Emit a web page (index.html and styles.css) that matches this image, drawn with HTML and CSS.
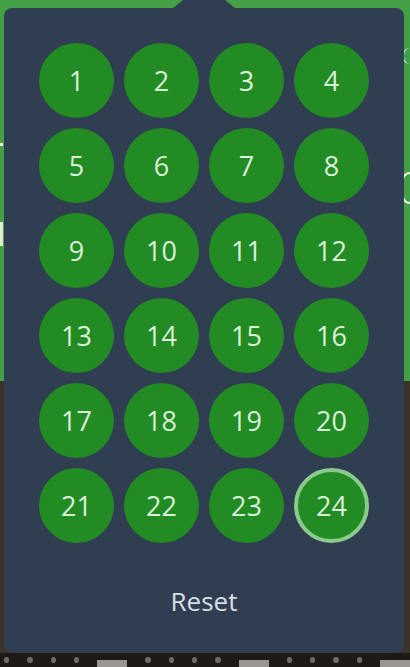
FILE: index.html
```html
<!DOCTYPE html>
<html>
<head>
<meta charset="utf-8">
<link rel="stylesheet" href="styles.css">
</head>
<body>
<div class="scene">
  <div class="bg-top">
    <span class="frag frag-l1"></span>
    <span class="frag frag-l2"></span>
    <span class="frag frag-r1"></span>
    <span class="frag frag-r2"></span>
  </div>
  <div class="bg-bottom"></div>
  <div class="strip">
    <span class="dot"></span><span class="dot"></span><span class="dot"></span><span class="dot"></span>
    <span class="tag"></span>
    <span class="dot"></span><span class="dot"></span><span class="dot"></span><span class="dot"></span>
    <span class="tag"></span>
    <span class="dot"></span><span class="dot"></span><span class="dot"></span><span class="dot"></span>
    <span class="tag"></span>
  </div>

  <div class="popover">
    <div class="arrow"></div>
    <div class="grid">
      <button class="num">1</button><button class="num">2</button><button class="num">3</button><button class="num">4</button>
      <button class="num">5</button><button class="num">6</button><button class="num">7</button><button class="num">8</button>
      <button class="num">9</button><button class="num">10</button><button class="num">11</button><button class="num">12</button>
      <button class="num">13</button><button class="num">14</button><button class="num">15</button><button class="num">16</button>
      <button class="num">17</button><button class="num">18</button><button class="num">19</button><button class="num">20</button>
      <button class="num">21</button><button class="num">22</button><button class="num">23</button><button class="num selected">24</button>
    </div>
    <button class="reset">Reset</button>
  </div>
</div>
</body>
</html>
```

FILE: styles.css
```css
html, body {
  margin: 0;
  padding: 0;
}
body {
  width: 410px;
  height: 667px;
  overflow: hidden;
  font-family: "Open Sans", "Noto Sans", sans-serif;
}
.scene {
  position: relative;
  width: 410px;
  height: 667px;
  display: flex;
  flex-direction: column;
}
.bg-top {
  position: relative;
  height: 381px;
  background: #43a047;
}
.bg-bottom {
  flex: 1;
  background: #3a3329;
}
.strip {
  height: 14px;
  background: #1f1a17;
  display: flex;
  align-items: center;
  gap: 18px;
  padding-left: 4px;
}
.dot {
  width: 6px;
  height: 6px;
  border-radius: 50%;
  background: #6d6a68;
}
.tag {
  width: 34px;
  height: 7px;
  background: #9a9692;
  margin-top: 6px;
}
.frag {
  position: absolute;
  background: #e8f3e6;
}
.frag-l1 { left: 0; top: 143px; width: 3px; height: 3px; }
.frag-l2 { left: 0; top: 222px; width: 3px; height: 24px; background: #e4ecd8; }
.frag-r1 {
  right: 0; top: 48px; width: 6px; height: 16px;
  background: transparent;
  border-left: 2px solid #bff0f0;
  border-radius: 8px 0 0 8px;
}
.frag-r2 {
  right: 0; top: 172px; width: 6px; height: 28px;
  background: transparent;
  border-left: 2px solid #e9f3e8;
  border-top: 2px solid #e9f3e8;
  border-bottom: 2px solid #e9f3e8;
  border-radius: 14px 0 0 14px;
}
.popover {
  position: absolute;
  left: 4px;
  top: 8px;
  width: 400px;
  height: 645px;
  box-sizing: border-box;
  background: #2f3e50;
  border-radius: 8px;
  padding: 35px 35px 0;
  display: flex;
  flex-direction: column;
  align-items: center;
}
.arrow {
  position: absolute;
  left: 169px;
  top: -8px;
  width: 62px;
  height: 8px;
  background: #2f3e50;
  clip-path: polygon(0 100%, 16% 0, 84% 0, 100% 100%);
}
.grid {
  display: grid;
  grid-template-columns: repeat(4, 75px);
  grid-auto-rows: 75px;
  gap: 10px;
}
.num {
  width: 75px;
  height: 75px;
  border-radius: 50%;
  border: none;
  padding: 0;
  margin: 0;
  background: #238b23;
  color: #d9f1d9;
  font-family: "Open Sans", "Noto Sans", sans-serif;
  font-size: 27px;
  line-height: 1;
  display: flex;
  align-items: center;
  justify-content: center;
}
.num.selected {
  box-sizing: border-box;
  border: 4px solid #8cc98c;
}
.reset {
  margin-top: 38px;
  border: none;
  background: transparent;
  color: #d6dee7;
  font-family: "Open Sans", "Noto Sans", sans-serif;
  font-size: 26px;
  line-height: 40px;
  padding: 0 10px;
}
```
